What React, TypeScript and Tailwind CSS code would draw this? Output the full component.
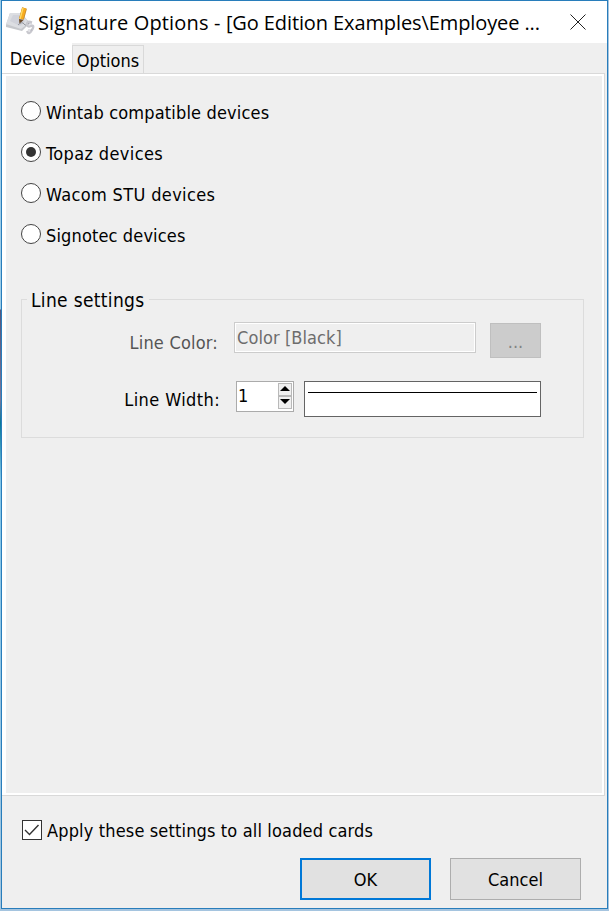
import type { ReactNode } from "react";

function Radio({ label, checked, spacing }: { label: string; checked?: boolean; spacing: string }) {
  return (
    <label className="flex h-[41px] items-center">
      <span className="flex size-5 shrink-0 items-center justify-center rounded-full border border-[#444] bg-white">
        {checked && <span className="size-[10px] rounded-full bg-[#333]" />}
      </span>
      <span className={`ml-[5px] mt-[4px] whitespace-nowrap ${spacing}`}>{label}</span>
    </label>
  );
}

function Button({ children, className }: { children: ReactNode; className: string }) {
  return (
    <button className={`flex h-[42px] w-[131px] items-center justify-center bg-[#e1e1e1] pt-[2px] ${className}`}>
      {children}
    </button>
  );
}

function SignatureIcon() {
  return (
    <svg width="29" height="30" viewBox="0 0 29 30" className="shrink-0">
      <path d="M0 18 4 6l11 0 9 10-8 8L0 20Z" fill="#c6c8cc" />
      <path d="M0 17 4 6l11 0 8 10-8 6Z" fill="#dcdee2" />
      <path d="m4 14 3-6 7 0 5 7-5 4Z" fill="#d0d2da" />
      <path d="m15.5 12 3-11" stroke="#c5882b" strokeWidth="5" />
      <path d="m15.2 12 3-11" stroke="#f7ac20" strokeWidth="4" />
      <path d="m14 12 3-11" stroke="#ffdc66" strokeWidth="1.3" />
      <path d="m13 12 4.5 1-4 4Z" fill="#6b4a29" />
      <path d="M12 18q4-4 6-1t6-2" stroke="#94969c" fill="none" />
      <path d="M26 15.5q-5-2-5 1.5t4 2 1 4-5 1" stroke="#c8c8ce" strokeWidth="2.4" fill="none" />
      <path d="M22 17h4M22 23h4" stroke="#b0b0ba" strokeWidth=".7" />
    </svg>
  );
}

export default function App() {
  return (
    <div className="h-[911px] w-[609px] overflow-hidden bg-[linear-gradient(180deg,#9bcce8_0,#9bcce8_309px,#55577d_310px,#77779b_400px,#08799a_423px,#81c5e8_480px,#a4c5df_911px)] bg-[length:1px_911px] bg-no-repeat bg-[#a5c4df] pl-px font-['DejaVu_Sans_Condensed','DejaVu_Sans',sans-serif] text-[18px] leading-[24px] text-black [font-stretch:condensed]">
      <main className="flex h-[909px] w-[607px] flex-col border border-[#287dbb] bg-[#efefef]">
        <header className="flex h-[42px] shrink-0 items-center bg-white pl-[4px]">
          <SignatureIcon />
          <h1 className="ml-[3px] mt-[2px] w-[515px] whitespace-nowrap font-['Open_Sans',sans-serif] text-[20px] [font-stretch:normal]">
            <span className="tracking-[0.15px]">Signature Options - </span>
            <span className="tracking-[-0.1px]">[Go Edition Examples\Employee ...</span>
          </h1>
          <svg width="18" height="18" viewBox="0 0 18 18" className="ml-[16px]">
            <path d="m1.5 1.5 15 15m0-15-15 15" stroke="#222" />
          </svg>
        </header>
        <nav className="flex h-[30px] shrink-0 items-end">
          <div className="flex h-[30px] w-[70px] items-center justify-center bg-white pl-px pt-[2px]">Device</div>
          <div className="flex h-[28px] w-[72px] items-center justify-center border border-b-0 border-[#d9d9d9] pt-[2px]">Options</div>
        </nav>
        <section className="mr-[2px] flex h-[723px] shrink-0 flex-col border-y border-r border-[#d9d9d9]">
          <div className="h-[721px] border-2 border-l-4 border-white pl-[15px] pt-[14px]">
            <div className="flex flex-col">
              <Radio label="Wintab compatible devices" spacing="tracking-[0.16px]" />
              <Radio label="Topaz devices" checked spacing="tracking-[0.38px]" />
              <Radio label="Wacom STU devices" spacing="tracking-[0.35px]" />
              <Radio label="Signotec devices" spacing="tracking-[0.14px]" />
            </div>
            <fieldset className="mt-[33px] h-[151px] w-[563px] border border-[#dcdcdc] pl-[5px]">
              <legend className="px-[4px] text-[19px] leading-[24px] tracking-[0.33px]"><span className="relative top-px">Line settings</span></legend>
              <div className="mt-[11px] flex h-[36px]">
                <span className="mt-[9px] w-[191px] text-right tracking-[0.2px] text-[#555]">Line Color:</span>
                <div className="ml-[16px] h-[31px] w-[242px] border border-[#cccccc] pl-[2px] leading-[30px] tracking-[0.08px] text-[#6d6d6d] shadow-[inset_0_0_0_1px_white]">Color [Black]</div>
                <button className="ml-[14px] mt-px h-[35px] w-[51px] border border-[#bfbfbf] bg-[#cccccc] pt-[2px] text-[#838383]">...</button>
              </div>
              <div className="mt-[23px] flex h-[36px]">
                <span className="mt-[7px] w-[193px] text-right tracking-[0.4px]">Line Width:</span>
                <div className="ml-[16px] flex h-[31px] w-[58px] border border-[#ababab] bg-white pl-px">
                  <span className="w-[40px] leading-[28px]">1</span>
                  <div className="mt-px flex h-[26px] w-[14px] flex-col">
                    <span className="flex h-[13px] items-center justify-center border border-[#b9b9b9] bg-[#f0f0f0] pb-[3px]">
                      <svg width="10" height="5"><path d="m0 5 5-5 5 5Z" /></svg>
                    </span>
                    <span className="flex h-[13px] items-center justify-center border border-[#b9b9b9] bg-[#f0f0f0] pb-[2px]">
                      <svg width="10" height="5"><path d="m0 0 5 5 5-5Z" /></svg>
                    </span>
                  </div>
                </div>
                <div className="ml-[10px] h-[36px] w-[237px] border border-[#646464] bg-white px-[3px] pt-[10px]">
                  <div className="h-px bg-black" />
                </div>
              </div>
            </fieldset>
          </div>
        </section>
        <footer className="pl-[20px] pt-[24px]">
          <label className="flex h-[20px] items-center">
            <span className="flex size-5 shrink-0 items-center justify-center border border-[#333] bg-white">
              <svg width="16" height="14" viewBox="0 0 16 14"><path d="m1 7 4.5 4.5 9-9.5" fill="none" stroke="#333" strokeWidth="1.4" /></svg>
            </span>
            <span className="ml-[5px] mt-[2px] whitespace-nowrap tracking-[0.15px]">Apply these settings to all loaded cards</span>
          </label>
          <div className="ml-[278px] mt-[18px] flex gap-[19px]">
            <Button className="border-2 border-[#0078d7]">OK</Button>
            <Button className="border border-[#adadad]">Cancel</Button>
          </div>
        </footer>
      </main>
    </div>
  );
}
